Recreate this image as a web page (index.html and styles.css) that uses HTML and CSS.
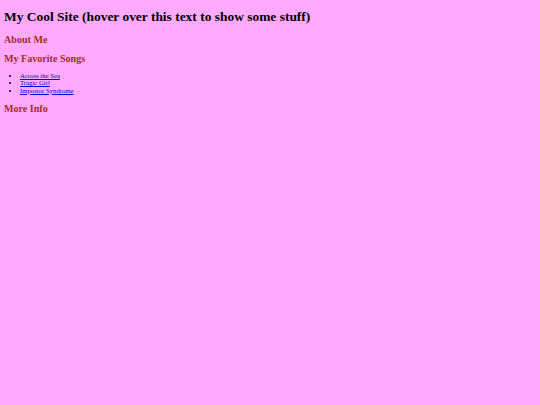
FILE: index.html
```html
<!DOCTYPE html>
<html>
<head>
<meta charset="utf-8">
<link rel="stylesheet" href="styles.css">
<title>My Cool Site</title>
</head>
<body class="page">
<h1 class="title">My Cool Site (hover over this text to show some stuff)</h1>
<h2 class="section about">About Me</h2>
<h2 class="section favorites">My Favorite Songs</h2>
<ul class="songs">
<li><a href="#">Across the Sea</a></li>
<li><a href="#">Tragic Girl</a></li>
<li><a href="#">Impostor Syndrome</a></li>
</ul>
<h2 class="section more">More Info</h2>
</body>
</html>
```
FILE: styles.css
```css
html {
  background-color: #ffaaff;
}
.page {
  margin: 0 4px;
  font-family: "Liberation Serif", serif;
  color: #000;
}
.title {
  font-size: 13.44px;
  margin: 9px 0 0;
}
.section {
  font-size: 10.08px;
  color: #a52a2a;
  margin: 0;
}
.about { margin-top: 8.66px; }
.favorites { margin-top: 8.1px; }
.songs {
  font-size: 6.72px;
  line-height: 7.3px;
  padding-left: 16px;
  margin: 8.2px 0 0;
}
.songs a { color: #0000ee; }
.more { margin-top: 9.3px; }
```
